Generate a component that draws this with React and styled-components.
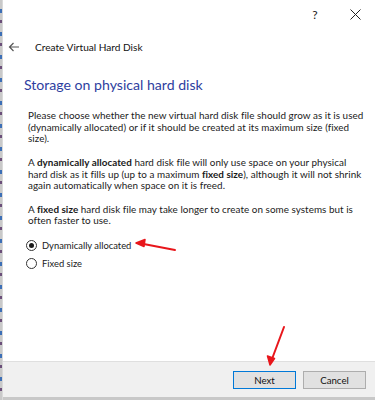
import React from 'react'
import styled, { createGlobalStyle } from 'styled-components'

const Global = createGlobalStyle`
  html, body { margin: 0; padding: 0; background: #fff; }
  body { font-family: Lato, "Open Sans", sans-serif; color: #1a1a1a; }
`

function App() {
    return (
        <>
            <Global />
            <Screen>
                <Edge />
                <Dialog>
                    <TitleBar>
                        <TitleBtn>?</TitleBtn>
                        <TitleBtn>
                            <svg width="11" height="11" viewBox="0 0 11 11">
                                <path d="M0.5 0.5L10.5 10.5M10.5 0.5L0.5 10.5" stroke="#222" strokeWidth="1" />
                            </svg>
                        </TitleBtn>
                    </TitleBar>
                    <Header>
                        <svg width="12" height="10" viewBox="0 0 12 10">
                            <path d="M11 5H1.5M5.5 1L1.5 5l4 4" stroke="#555" strokeWidth="1.2" fill="none" />
                        </svg>
                        <HeaderTitle>Create Virtual Hard Disk</HeaderTitle>
                    </Header>
                    <Content>
                        <Heading>Storage on physical hard disk</Heading>
                        <Body>
                            <Para>
                                Please choose whether the new virtual hard disk file should grow as it is used<br />
                                (dynamically allocated) or if it should be created at its maximum size (fixed<br />
                                size).
                            </Para>
                            <Para>
                                A <b>dynamically allocated</b> hard disk file will only use space on your physical<br />
                                hard disk as it fills up (up to a maximum <b>fixed size</b>), although it will not shrink<br />
                                again automatically when space on it is freed.
                            </Para>
                            <Para>
                                A <b>fixed size</b> hard disk file may take longer to create on some systems but is<br />
                                often faster to use.
                            </Para>
                            <Options>
                                <Option>
                                    <Radio checked />
                                    Dynamically allocated
                                </Option>
                                <Option>
                                    <Radio />
                                    Fixed size
                                </Option>
                            </Options>
                        </Body>
                    </Content>
                    <Footer>
                        <Button primary>Next</Button>
                        <Button>Cancel</Button>
                    </Footer>
                    <BottomStrip />
                </Dialog>
                <Arrows width="375" height="400" viewBox="0 0 375 400">
                    <path d="M175 250L141 243.5" stroke="#e8161b" strokeWidth="2" strokeLinecap="round" />
                    <path d="M136 243L145 239.5L144 246.5Z" fill="#e8161b" stroke="#e8161b" strokeWidth="1.5" strokeLinejoin="round" />
                    <path d="M284 327L272 359" stroke="#e8161b" strokeWidth="2" strokeLinecap="round" />
                    <path d="M270 365L267.5 356L274.5 358.5Z" fill="#e8161b" stroke="#e8161b" strokeWidth="1.5" strokeLinejoin="round" />
                </Arrows>
            </Screen>
        </>
    )
}

export default App

const Screen = styled.div`
    position: relative;
    display: flex;
    width: 375px;
    height: 400px;
    overflow: hidden;
`
const Edge = styled.div`
    width: 2px;
    flex: none;
    background: repeating-linear-gradient(
        to bottom,
        #c9c9c9 0 9px,
        #3d6fb6 9px 13px,
        #c9c9c9 13px 20px,
        #6b4f7a 20px 23px
    );
`
const Dialog = styled.div`
    flex: 1;
    display: flex;
    flex-direction: column;
    border-left: 1px solid #d9d9d9;
`
const TitleBar = styled.div`
    height: 28px;
    display: flex;
    justify-content: flex-end;
    align-items: center;
`
const TitleBtn = styled.div`
    width: 40px;
    height: 26px;
    display: flex;
    align-items: center;
    justify-content: center;
    font-size: 12px;
    color: #222;
`
const Header = styled.div`
    height: 38px;
    display: flex;
    align-items: center;
    padding-left: 5px;
    gap: 15px;
`
const HeaderTitle = styled.div`
    font-size: 10.1px;
    color: #111;
`
const Content = styled.div`
    flex: 1;
    padding: 9px 0 0 21px;
`
const Heading = styled.div`
    font-size: 14.1px;
    color: #2e3ea0;
    line-height: 20px;
`
const Body = styled.div`
    padding: 15px 0 0 4px;
`
const Para = styled.p`
    margin: 0 0 11.7px;
    font-size: 9.9px;
    letter-spacing: 0.04px;
    line-height: 11.7px;
    white-space: nowrap;
    b { font-weight: 700; }
`
const Options = styled.div`
    display: flex;
    flex-direction: column;
    gap: 5px;
    margin-top: 8px;
`
const Option = styled.label`
    display: flex;
    align-items: center;
    gap: 5px;
    font-size: 9.4px;
    line-height: 13px;
    margin-left: -2px;
`
const Radio = styled.span`
    width: 11px;
    height: 11px;
    border-radius: 50%;
    border: 1px solid #333;
    box-sizing: border-box;
    display: flex;
    align-items: center;
    justify-content: center;
    &::after {
        content: '';
        width: 5px;
        height: 5px;
        border-radius: 50%;
        background: ${p => (p.checked ? '#1a1a1a' : 'transparent')};
    }
`
const Footer = styled.div`
    height: 35px;
    background: #f0f0f0;
    border-top: 1px solid #dfdfdf;
    display: flex;
    justify-content: flex-end;
    align-items: center;
    gap: 7px;
    padding-right: 9px;
`
const Button = styled.div`
    width: 63px;
    height: 18px;
    box-sizing: border-box;
    background: #e1e1e1;
    border: 1px solid ${p => (p.primary ? '#0078d7' : '#adadad')};
    display: flex;
    align-items: center;
    justify-content: center;
    font-size: 9.7px;
    color: #111;
`
const BottomStrip = styled.div`
    height: 3px;
    background: #c8c8c8;
`
const Arrows = styled.svg`
    position: absolute;
    left: 0;
    top: 0;
    pointer-events: none;
`
